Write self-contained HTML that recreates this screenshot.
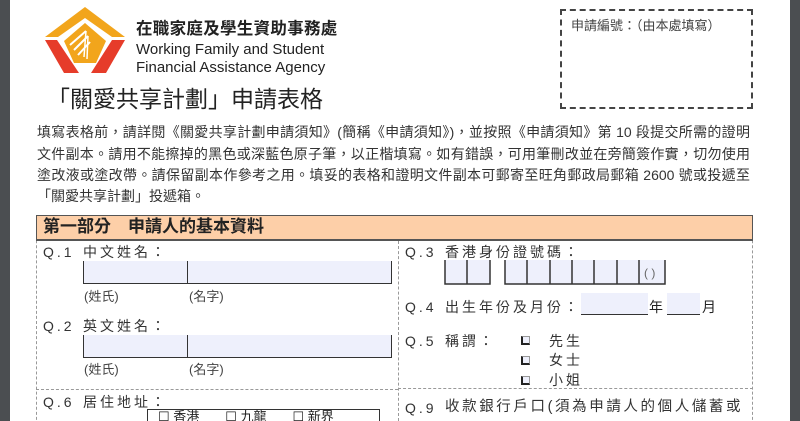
<!DOCTYPE html>
<html><head><meta charset="utf-8"><style>
*{margin:0;padding:0;box-sizing:border-box}
html{width:800px;height:421px;overflow:hidden}
body{width:800px;height:421px;overflow:hidden;background:#fff;position:relative;font-family:"Liberation Sans","Noto Sans CJK TC",sans-serif;color:#222;line-height:1.15}
.a{position:absolute;white-space:nowrap}
.lb{position:absolute;left:0;top:0;width:10px;height:421px;background:#4b4e51}
.rb{position:absolute;left:790px;top:0;width:10px;height:421px;background:#4b4e51}
.p{position:absolute;left:37px;width:713px;font-size:14px;line-height:21px;text-align:justify;text-align-last:justify;white-space:nowrap;color:#333;overflow:hidden}
.q{font-size:14px;letter-spacing:3px;color:#333}
.fld{position:absolute;background:#eef0fc;border-bottom:1.5px solid #333}
.sm{font-size:13px;color:#444}
.cb{position:absolute;width:9px;height:9px;border:1px solid #999;border-bottom:2px solid #222;border-left:2px solid #222;background:#eef0fc}
</style></head><body>
<div class="lb"></div><div class="rb"></div>
<svg class="a" style="left:44px;top:5px" width="82" height="70" viewBox="0 0 82 70">
<polygon points="1,32 41,2 81,32 68,32 41,13 14,32" fill="#f2a51c"/>
<polygon points="1,35 13,35 35,68 20,68" fill="#e63c2a"/>
<polygon points="68,35 81,35 62,68 47,68" fill="#e63c2a"/>
<polygon points="20,36 41,18 62,36 52,58 30,58" fill="#f2a51c"/>
<path d="M26,40 L42,26 M30,45 L44,31 M34,50 L46,37" stroke="#fff" stroke-width="2" fill="none"/>
<path d="M42,26 L40,52 M44,31 L43,54" stroke="#fff" stroke-width="1.5" fill="none"/>
</svg>
<div class="a" style="left:136px;top:20px;font-size:16.5px;font-weight:bold;letter-spacing:0.3px;color:#222">在職家庭及學生資助事務處</div>
<div class="a" style="left:136px;top:41px;font-size:15px;color:#222">Working Family and Student</div>
<div class="a" style="left:136px;top:59px;font-size:15px;color:#222">Financial Assistance Agency</div>
<div class="a" style="left:47px;top:86px;font-size:23px;color:#222">「關愛共享計劃」申請表格</div>
<div class="a" style="left:560px;top:9px;width:193px;height:100px;border:2px dashed #444"></div>
<div class="a" style="left:571px;top:19px;font-size:13px;color:#444">申請編號：（由本處填寫）</div>
<div class="p" style="top:122px">填寫表格前，請詳閱《關愛共享計劃申請須知》(簡稱《申請須知》)，並按照《申請須知》第 10 段提交所需的證明</div>
<div class="p" style="top:144px">文件副本。請用不能擦掉的黑色或深藍色原子筆，以正楷填寫。如有錯誤，可用筆刪改並在旁簡簽作實，切勿使用</div>
<div class="p" style="top:165px">塗改液或塗改帶。請保留副本作參考之用。填妥的表格和證明文件副本可郵寄至旺角郵政局郵箱 2600 號或投遞至</div>
<div class="a" style="left:37px;top:186px;font-size:14px;line-height:21px;color:#333">「關愛共享計劃」投遞箱。</div>
<div class="a" style="left:36px;top:215px;width:717px;height:220px;border:1px dashed #999;border-top:none"></div>
<div class="a" style="left:36px;top:215px;width:717px;height:26px;background:#fdcfa8;border:1px solid #555;border-bottom:2px solid #555"></div>
<div class="a" style="left:43px;top:217px;font-size:17px;font-weight:bold;color:#222">第一部分　申請人的基本資料</div>
<div class="a" style="left:398px;top:241px;width:0;height:180px;border-left:1px dashed #999"></div>
<div class="a" style="left:36px;top:389px;width:362px;border-top:1px dashed #999"></div>
<div class="a" style="left:398px;top:388px;width:355px;border-top:1px dashed #999"></div>
<div class="a q" style="left:43px;top:244px">Q.1</div><div class="a q" style="left:83px;top:244px">中文姓名：</div>
<div class="fld" style="left:83px;top:261px;width:309px;height:23px;border-left:1.5px solid #333;border-right:1.5px solid #333"></div>
<div class="a" style="left:187px;top:261px;height:23px;border-left:1.5px solid #333"></div>
<div class="a sm" style="left:84px;top:290px">(姓氏)</div><div class="a sm" style="left:189px;top:290px">(名字)</div>
<div class="a q" style="left:43px;top:318px">Q.2</div><div class="a q" style="left:83px;top:318px">英文姓名：</div>
<div class="fld" style="left:83px;top:335px;width:309px;height:23px;border-left:1.5px solid #333;border-right:1.5px solid #333"></div>
<div class="a" style="left:187px;top:335px;height:23px;border-left:1.5px solid #333"></div>
<div class="a sm" style="left:84px;top:363px">(姓氏)</div><div class="a sm" style="left:189px;top:363px">(名字)</div>
<div class="a q" style="left:43px;top:394px">Q.6</div><div class="a q" style="left:83px;top:394px">居住地址：</div>
<div class="a" style="left:147px;top:409px;width:233px;height:20px;border:1.5px solid #333"></div>
<div class="a" style="left:158px;top:410px;font-size:13px">☐ 香港　　☐ 九龍　　☐ 新界</div>
<div class="a q" style="left:405px;top:244px">Q.3</div><div class="a q" style="left:445px;top:244px">香港身份證號碼：</div>
<svg class="a" style="left:440px;top:258px" width="230" height="28">
<rect x="5" y="2" width="45" height="24" fill="#eef0fc"/><rect x="65" y="2" width="160" height="24" fill="#eef0fc"/>
<path d="M5,2V26H50V2M27,2V26M65,2V26H225V2M87,2V26M110,2V26M132,2V26M154,2V26M177,2V26M199,2V26" stroke="#333" stroke-width="1.5" fill="none"/>
<text x="204" y="19" font-size="12" fill="#666" font-family="Liberation Sans">( )</text></svg>
<div class="a q" style="left:405px;top:299px">Q.4</div><div class="a q" style="left:445px;top:299px">出生年份及月份：</div>
<div class="fld" style="left:581px;top:293px;width:67px;height:22px"></div>
<div class="a" style="left:649px;top:299px;font-size:14px">年</div>
<div class="fld" style="left:667px;top:293px;width:33px;height:22px"></div>
<div class="a" style="left:702px;top:299px;font-size:14px">月</div>
<div class="a q" style="left:405px;top:333px">Q.5</div><div class="a q" style="left:445px;top:333px">稱謂：</div>
<div class="cb" style="left:521px;top:336px"></div><div class="cb" style="left:521px;top:356px"></div><div class="cb" style="left:521px;top:376px"></div>
<div class="a q" style="left:549px;top:333px">先生</div><div class="a q" style="left:549px;top:352px">女士</div><div class="a q" style="left:549px;top:372px">小姐</div>
<div class="a q" style="left:405px;top:400px">Q.9</div><div class="a" style="left:445px;top:399px;font-size:14.5px;letter-spacing:2.6px;color:#333">收款銀行戶口(須為申請人的個人儲蓄或</div>
</body></html>
